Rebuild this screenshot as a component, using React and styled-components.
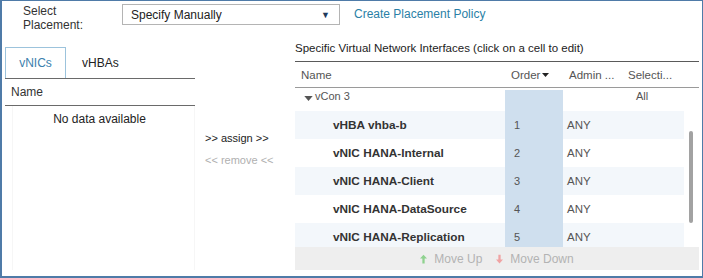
import styled, { createGlobalStyle } from "styled-components";

const GlobalStyle = createGlobalStyle`
  html, body {
    margin: 0;
    padding: 0;
    background: #ffffff;
  }
  body {
    font-family: "Liberation Sans", Arial, sans-serif;
    color: #333;
  }
`;

const rows = [
  { name: "vHBA vhba-b", order: 1, admin: "ANY" },
  { name: "vNIC HANA-Internal", order: 2, admin: "ANY" },
  { name: "vNIC HANA-Client", order: 3, admin: "ANY" },
  { name: "vNIC HANA-DataSource", order: 4, admin: "ANY" },
  { name: "vNIC HANA-Replication", order: 5, admin: "ANY" },
];

export default function App() {
  return (
    <>
      <GlobalStyle />
      <Frame>
        <TopRow>
          <Label>
            Select
            <br />
            Placement:
          </Label>
          <Select>
            <span>Specify Manually</span>
            <Caret>▼</Caret>
          </Select>
          <Link>Create Placement Policy</Link>
        </TopRow>

        <Body>
          <LeftPanel>
            <Tabs>
              <Tab active>vNICs</Tab>
              <Tab>vHBAs</Tab>
            </Tabs>
            <LeftHeader>Name</LeftHeader>
            <LeftList>
              <Empty>No data available</Empty>
            </LeftList>
          </LeftPanel>

          <Actions>
            <ActionLink>&gt;&gt; assign &gt;&gt;</ActionLink>
            <ActionLink disabled>&lt;&lt; remove &lt;&lt;</ActionLink>
          </Actions>

          <RightPanel>
            <Title>Specific Virtual Network Interfaces (click on a cell to edit)</Title>
            <HeaderRow>
              <NameCol>Name</NameCol>
              <OrderCol>
                Order
                <SortIcon viewBox="0 0 7 4">
                  <path d="M0 0 H7 L3.5 4 Z" fill="#222" />
                </SortIcon>
              </OrderCol>
              <AdminCol>Admin ...</AdminCol>
              <SelCol>Selecti...</SelCol>
            </HeaderRow>

            <Scroller>
              <GroupRow>
                <NameCell>
                  <Toggle viewBox="0 0 10 6">
                    <path d="M0 0 H10 L5 6 Z" fill="#555" />
                  </Toggle>
                  vCon 3
                </NameCell>
                <OrderCell />
                <AdminCell />
                <SelCell>All</SelCell>
              </GroupRow>
              {rows.map((r, i) => (
                <DataRow key={r.name} striped={i % 2 === 0}>
                  <ItemName>{r.name}</ItemName>
                  <OrderCell>{r.order}</OrderCell>
                  <AdminCell>{r.admin}</AdminCell>
                  <SelCell />
                </DataRow>
              ))}
              <ScrollThumb />
            </Scroller>

            <Footer>
              <MoveBtn>
                <Arrow viewBox="0 0 8 10">
                  <path d="M4 0 L8 4.5 H5.3 V10 H2.7 V4.5 H0 Z" fill="#8fd28f" />
                </Arrow>
                Move Up
              </MoveBtn>
              <MoveBtn>
                <Arrow viewBox="0 0 8 10">
                  <path d="M4 10 L8 5.5 H5.3 V0 H2.7 V5.5 H0 Z" fill="#f0a3a3" />
                </Arrow>
                Move Down
              </MoveBtn>
            </Footer>
          </RightPanel>
        </Body>
      </Frame>
    </>
  );
}

const Frame = styled.div`
  width: 703px;
  height: 278px;
  box-sizing: border-box;
  border: 1px solid #4f7ba8;
  border-left-width: 2px;
  border-bottom-width: 2px;
  overflow: hidden;
  display: flex;
  flex-direction: column;
  font-size: 12px;
`;

const TopRow = styled.div`
  display: flex;
  align-items: flex-start;
  height: 35px;
  padding: 3px 0 0 21px;
`;

const Label = styled.div`
  width: 99px;
  line-height: 14px;
  color: #333;
`;

const Select = styled.div`
  width: 218px;
  height: 21px;
  box-sizing: border-box;
  border: 1px solid #b4b4b4;
  display: flex;
  align-items: center;
  justify-content: space-between;
  padding: 0 9px 0 8px;
  color: #222;
`;

const Caret = styled.span`
  font-size: 9px;
  color: #1f3a5c;
`;

const Link = styled.div`
  margin: 3px 0 0 14px;
  color: #2a7fa6;
`;

const Body = styled.div`
  display: flex;
  flex: 1;
  min-height: 0;
`;

const LeftPanel = styled.div`
  width: 190px;
  margin-left: 3px;
  padding-top: 8px;
  display: flex;
  flex-direction: column;
`;

const Tabs = styled.div`
  display: flex;
  height: 31px;
  border-bottom: 1px solid #6a6a6a;
`;

const Tab = styled.div`
  width: ${(p) => (p.active ? "61px" : "auto")};
  padding: ${(p) => (p.active ? "0" : "0 0 0 15px")};
  display: flex;
  align-items: center;
  justify-content: center;
  box-sizing: border-box;
  color: ${(p) => (p.active ? "#3b7fae" : "#222")};
  border: 1px solid ${(p) => (p.active ? "#9cc3dc" : "transparent")};
  border-bottom: none;
`;

const LeftHeader = styled.div`
  height: 27px;
  line-height: 26px;
  padding-left: 6px;
  box-sizing: border-box;
  border-bottom: 1px solid #6a6a6a;
  color: #333;
`;

const LeftList = styled.div`
  flex: 1;
  margin: 0 0 6px 7px;
  border-left: 1px solid #f6f6f6;
  border-right: 1px solid #f6f6f6;
`;

const Empty = styled.div`
  text-align: center;
  padding-top: 6px;
  padding-right: 8px;
  color: #222;
`;

const Actions = styled.div`
  width: 100px;
  padding: 93px 0 0 10px;
  box-sizing: border-box;
  display: flex;
  flex-direction: column;
  gap: 10px;
  font-size: 11px;
`;

const ActionLink = styled.div`
  color: ${(p) => (p.disabled ? "#b0b0b0" : "#222")};
`;

const RightPanel = styled.div`
  flex: 1;
  display: flex;
  flex-direction: column;
  padding: 2px 3px 6px 0;
`;

const Title = styled.div`
  height: 21px;
  line-height: 15px;
  border-bottom: 1px solid #5a5a5a;
  box-sizing: border-box;
  color: #222;
  font-size: 11.5px;
`;

const HeaderRow = styled.div`
  display: flex;
  height: 26px;
  flex-shrink: 0;
  align-items: center;
  border-bottom: 1px solid #9a9a9a;
  box-sizing: border-box;
  color: #555;
  font-size: 11.5px;
`;

const NameCol = styled.div`
  width: 210px;
  padding-left: 6px;
  box-sizing: border-box;
`;

const OrderCol = styled.div`
  width: 58px;
  padding-left: 6px;
  box-sizing: border-box;
  display: flex;
  align-items: center;
  gap: 2px;
`;

const SortIcon = styled.svg`
  width: 7px;
  height: 4px;
  margin-top: 1px;
`;

const AdminCol = styled.div`
  width: 59px;
  padding-left: 6px;
  box-sizing: border-box;
`;

const SelCol = styled.div`
  width: 60px;
  padding-left: 6px;
  box-sizing: border-box;
  white-space: nowrap;
`;

const Scroller = styled.div`
  position: relative;
  flex: 1;
  min-height: 0;
  overflow: hidden;
  padding-right: 15px;
`;

const RowBase = styled.div`
  display: flex;
  align-items: center;
  font-size: 11px;
  color: #333;
`;

const GroupRow = styled(RowBase)`
  height: 23px;
  align-items: flex-start;
  padding-top: 2px;
  box-sizing: border-box;
`;

const DataRow = styled(RowBase)`
  height: 28px;
  background: ${(p) => (p.striped ? "#f3f7fb" : "#ffffff")};
`;

const NameCell = styled.div`
  width: 210px;
  padding-left: 9px;
  box-sizing: border-box;
  display: flex;
  align-items: center;
  gap: 2px;
  color: #555;
`;

const Toggle = styled.svg`
  width: 9px;
  height: 5px;
  margin-top: 4px;
`;

const ItemName = styled.div`
  width: 210px;
  padding-left: 38px;
  box-sizing: border-box;
  font-weight: bold;
  font-size: 11.8px;
  color: #333;
`;

const OrderCell = styled.div`
  width: 58px;
  align-self: stretch;
  background: #cfdfee;
  padding-left: 9px;
  box-sizing: border-box;
  display: flex;
  align-items: center;
  color: #555;
`;

const AdminCell = styled.div`
  width: 59px;
  padding-left: 4px;
  box-sizing: border-box;
  color: #555;
  font-size: 11.5px;
`;

const SelCell = styled.div`
  width: 60px;
  padding-left: 14px;
  box-sizing: border-box;
  color: #555;
`;

const ScrollThumb = styled.div`
  position: absolute;
  right: 6px;
  top: 43px;
  width: 4px;
  height: 92px;
  border-radius: 2px;
  background: #a2a2a2;
`;

const Footer = styled.div`
  height: 23px;
  flex-shrink: 0;
  background: #eeeeee;
  display: flex;
  align-items: center;
  justify-content: center;
  gap: 14px;
  color: #b3b3b3;
  font-size: 12px;
`;

const MoveBtn = styled.div`
  display: flex;
  align-items: center;
  gap: 7px;
`;

const Arrow = styled.svg`
  width: 7px;
  height: 10px;
`;
